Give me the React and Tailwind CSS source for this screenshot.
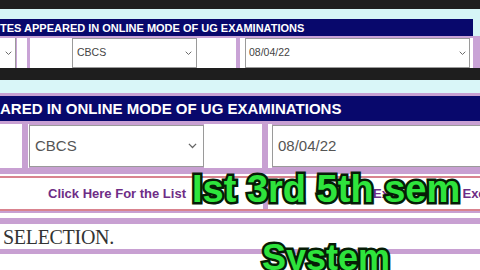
import React from "react";

function Chevron({ size = 6, color = "#666" }) {
  return (
    <svg width={size} height={size * 0.6} viewBox="0 0 10 6" fill="none">
      <path d="M1 1 L5 5 L9 1" stroke={color} strokeWidth="1.4" />
    </svg>
  );
}

function Sel({ text, className, textClass, chev }) {
  return (
    <div className={"flex items-center justify-between bg-white border border-[#9a9a9a] " + className}>
      <span className={textClass}>{text}</span>
      {chev}
    </div>
  );
}

export default function App() {
  return (
    <div className="relative w-[480px] h-[270px] overflow-hidden bg-white font-['Liberation_Sans',Arial,sans-serif]">
      {/* top strip */}
      <div className="h-[9px] bg-[#1e1e1e]" />
      <div className="h-[10px] bg-[#d6f5f6]" />
      <div className="flex h-[17px] bg-[#d6f5f6]">
        <div className="w-[473px] bg-[#08086c] text-white font-bold text-[11px] leading-[18px] whitespace-nowrap overflow-hidden">
          TES APPEARED IN ONLINE MODE OF UG EXAMINATIONS
        </div>
      </div>
      <div className="h-[2px] bg-[#c9a3d6]" />
      <div className="flex h-[30px] bg-[#c9a3d6]">
        <div className="w-[16px] bg-white border-r border-[#9a9a9a] flex items-center justify-end pr-[3px]">
          <Chevron size={7} />
        </div>
        <div className="w-[1px]" />
        <div className="w-[10px] bg-white" />
        <div className="w-[3px]" />
        <div className="w-[42px] bg-white" />
        <Sel
          text="CBCS"
          className="w-[125px] pl-[4px] pr-[4px]"
          textClass="text-[10.5px] text-[#444]"
          chev={<Chevron size={7} />}
        />
        <div className="w-[39px] bg-white" />
        <div className="w-[4px]" />
        <div className="w-[5px] bg-white" />
        <Sel
          text="08/04/22"
          className="w-[225px] pl-[3px] pr-[3px]"
          textClass="text-[10.5px] text-[#444]"
          chev={<Chevron size={7} />}
        />
        <div className="w-[3px] bg-white" />
      </div>
      <div className="h-[12px] bg-[#1e1e1e]" />

      {/* zoomed section */}
      <div className="h-[13px] bg-[#d9f6f8]" />
      <div className="h-[3px] bg-[#c8a0d2]" />
      <div className="h-[25px] bg-[#08086c] text-white font-bold text-[15px] leading-[26px] whitespace-nowrap overflow-hidden">
        ARED IN ONLINE MODE OF UG EXAMINATIONS
      </div>
      <div className="h-[3px] bg-[#c8a0d2]" />
      <div className="flex h-[44px] bg-[#c8a0d2]">
        <div className="w-[22px] bg-white" />
        <div className="w-[6px]" />
        <div className="w-[1px] bg-white" />
        <Sel
          text="CBCS"
          className="w-[175px] my-[1px] pl-[5px] pr-[6px]"
          textClass="text-[15px] text-[#555]"
          chev={<Chevron size={9} />}
        />
        <div className="w-[58px] bg-white" />
        <div className="w-[6px]" />
        <div className="w-[4px] bg-white" />
        <Sel
          text="08/04/22"
          className="flex-1 my-[1px] pl-[5px] border-r-0"
          textClass="text-[15px] text-[#555]"
          chev={null}
        />
      </div>
      <div className="h-[6px] bg-[#c8a0d2]" />
      <div className="h-[2px] bg-white" />
      <div className="h-[2px] bg-[#d9838f]" />
      <div className="flex h-[31px]">
        <div className="w-[263px] bg-white flex items-center pl-[48px]">
          <span className="text-[13px] font-bold text-[#6e2d86] whitespace-nowrap">Click Here For the List</span>
        </div>
        <div className="w-[5px] bg-[#c8a0d2]" />
        <div className="flex-1 bg-white flex items-center overflow-hidden">
          <span className="ml-[105px] text-[13px] font-bold text-[#6e2d86] whitespace-nowrap">Expelled</span>
          <span className="ml-[36px] text-[13px] font-bold text-[#6e2d86] whitespace-nowrap">Exc</span>
        </div>
      </div>
      <div className="h-[2px] bg-[#d9838f]" />
      <div className="h-[2px] bg-[#c8a0d2]" />
      <div className="h-[5px] bg-white" />
      <div className="h-[6px] bg-[#c8a0d2]" />
      <div className="h-[25px] bg-white flex items-center pl-[3px]">
        <span className="font-['Liberation_Serif','Times_New_Roman',serif] text-[20px] text-[#333] leading-none tracking-[-0.3px]">SELECTION.</span>
      </div>
      <div className="h-[5px] bg-[#c8a0d2]" />

      {/* overlay captions */}
      <div className="absolute left-[192px] top-[170px] text-[38px] leading-none font-bold text-[#2ee43c] whitespace-nowrap [-webkit-text-stroke:5px_#061c06] [paint-order:stroke_fill]">
        Ist 3rd 5th sem
      </div>
      <div className="absolute left-[262px] top-[240px] text-[36px] leading-none font-bold text-[#2ee43c] whitespace-nowrap [-webkit-text-stroke:5px_#061c06] [paint-order:stroke_fill]">
        System
      </div>
    </div>
  );
}
